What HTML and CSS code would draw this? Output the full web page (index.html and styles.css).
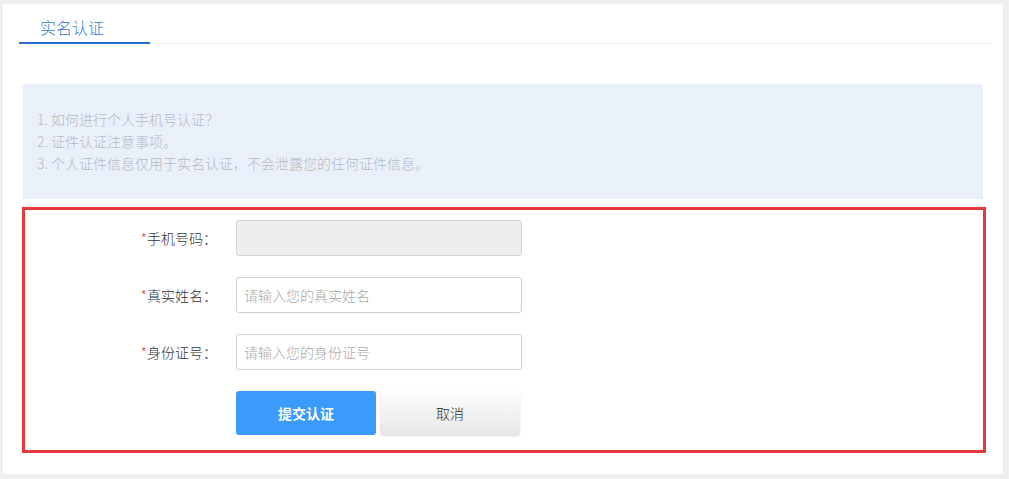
FILE: index.html
```html
<!DOCTYPE html>
<html lang="zh-CN">
<head>
<meta charset="utf-8">
<title>实名认证</title>
<link rel="stylesheet" href="styles.css">
</head>
<body>
<div class="panel">
  <div class="tabs">
    <div class="tab active">实名认证</div>
  </div>
  <div class="notice">
    <p>1. 如何进行个人手机号认证？</p>
    <p>2. 证件认证注意事项。</p>
    <p>3. 个人证件信息仅用于实名认证，不会泄露您的任何证件信息。</p>
  </div>
  <form class="form">
    <div class="row">
      <label class="label"><span class="req">*</span>手机号码：</label>
      <input class="input disabled" type="text" disabled>
    </div>
    <div class="row">
      <label class="label"><span class="req">*</span>真实姓名：</label>
      <input class="input" type="text" placeholder="请输入您的真实姓名">
    </div>
    <div class="row">
      <label class="label"><span class="req">*</span>身份证号：</label>
      <input class="input" type="text" placeholder="请输入您的身份证号">
    </div>
    <div class="row actions">
      <span class="label"></span>
      <button type="button" class="btn primary">提交认证</button>
      <button type="button" class="btn cancel">取消</button>
    </div>
  </form>
</div>
</body>
</html>
```
FILE: styles.css
```css
* { box-sizing: border-box; }
html, body { margin: 0; padding: 0; }
body {
  background: #efefef;
  font-family: "Noto Sans CJK SC", "Noto Sans", sans-serif;
  width: 1009px;
  height: 479px;
  overflow: hidden;
  padding-top: 4px;
  padding-left: 3px;
}
.panel {
  background: #fff;
  width: 1000px;
  height: 470px;
  padding: 0 0 0 16px;
}
.tabs {
  display: flex;
  width: 973px;
  border-bottom: 1px solid #eef0f3;
  height: 40px;
}
.tab {
  width: 131px;
  font-size: 16px;
  font-weight: 300;
  color: #3a7bd5;
  padding-left: 21px;
  padding-top: 12px;
  line-height: 22px;
  border-bottom: 2px solid #2a6bc8;
  height: 40px;
}
.notice {
  margin: 40px 0 0 4px;
  width: 960px;
  height: 115px;
  background: #e9f0fa;
  padding: 24px 0 0 14px;
  font-size: 14px;
  font-weight: 300;
  line-height: 22px;
  color: #b7b9bc;
}
.notice p { margin: 0; }
.form {
  margin: 8px 0 0 3px;
  width: 964px;
  height: 246px;
  border: 3px solid #e5393c;
  padding-top: 10px;
}
.row {
  display: flex;
  align-items: center;
  margin-bottom: 21px;
}
.label {
  width: 192px;
  text-align: right;
  font-size: 14px;
  font-weight: 300;
  color: #333;
  margin-right: 19px;
  flex: none;
}
.req { color: #e5393c; }
.input {
  width: 286px;
  height: 36px;
  border: 1px solid #cfcfcf;
  border-radius: 3px;
  padding: 0 7px;
  font-family: inherit;
  font-size: 14px;
  font-weight: 300;
  color: #333;
  background: #fff;
  outline: none;
}
.input::placeholder { color: #a9a9a9; }
.input.disabled { background: #eeeeee; border-color: #d4d4d4; }
.actions { margin-bottom: 0; }
.btn {
  width: 140px;
  height: 44px;
  border: none;
  border-radius: 3px;
  font-family: inherit;
  font-size: 14px;
  cursor: pointer;
}
.btn.primary {
  background: #3a9bfd;
  color: #fff;
  font-weight: bold;
  margin-right: 4px;
}
.btn.cancel {
  background: linear-gradient(#ffffff, #e6e6e6);
  color: #333;
  font-weight: 300;
  box-shadow: 0 1px 2px rgba(0,0,0,0.15);
}
```
